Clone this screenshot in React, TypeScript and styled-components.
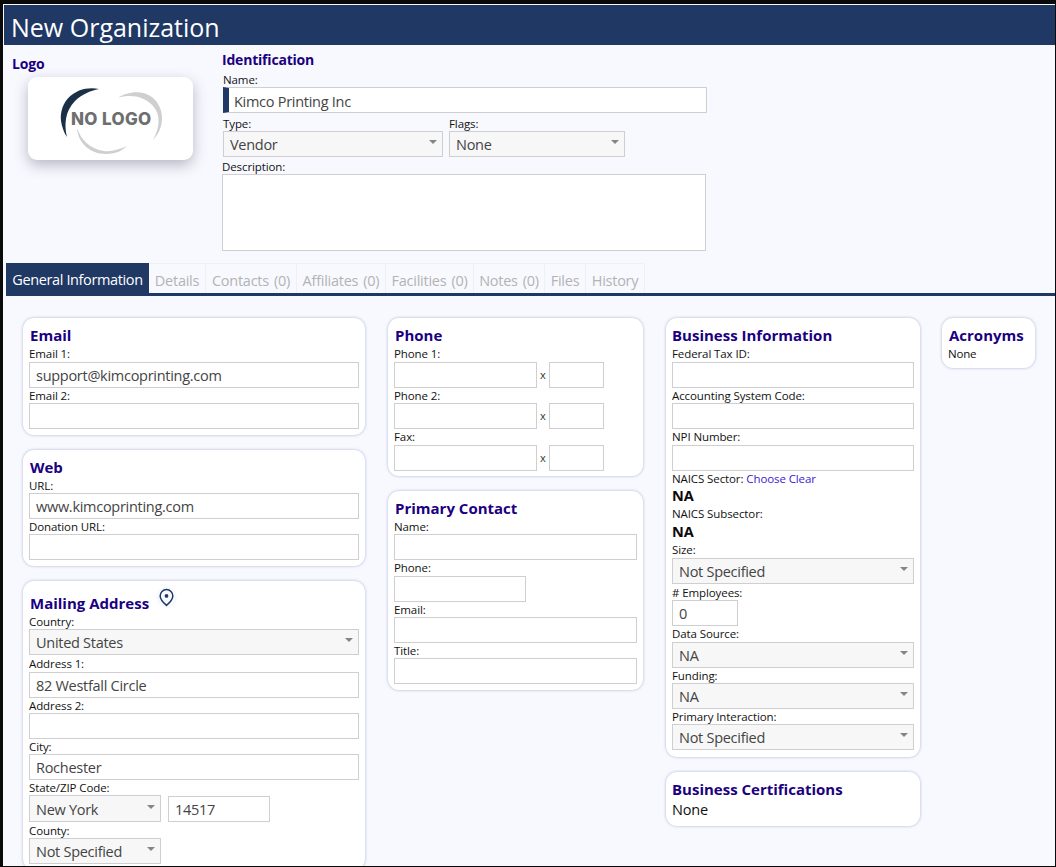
import React from 'react';
import styled, {createGlobalStyle} from 'styled-components';

const NAVY = '#1f3864';
const HEADING = '#1b0080';
const FONT = '"Open Sans", "Noto Sans", sans-serif';

const GlobalStyle = createGlobalStyle`
  html, body {
    margin: 0;
    padding: 0;
    background: #f8f9ff;
    font-family: ${FONT};
    overflow: hidden;
  }
`;

const Frame = styled.div`
  box-sizing: border-box;
  width: 1056px;
  height: 867px;
  overflow: hidden;
  background: #f8f9ff;
  border-style: solid;
  border-color: #0a0a0a;
  border-width: 4px 1px 1px 3px;
`;

const TitleBar = styled.div`
  height: 40px;
  margin: 1px 0 0 1px;
  padding-left: 7px;
  background: ${NAVY};
  color: #fff;
  font-size: 25px;
  line-height: 45px;
`;

const Top = styled.div`
  display: flex;
  height: 218px;
`;

const LogoColumn = styled.div`
  width: 219px;
  padding: 10px 0 0 9px;
  box-sizing: border-box;
`;

const Heading = styled.div`
  font-size: 14px;
  font-weight: 700;
  line-height: 18px;
  color: ${HEADING};
  letter-spacing: -0.2px;
`;

const LogoCard = styled.div`
  width: 165px;
  height: 83px;
  margin: 4px 0 0 16px;
  background: #fff;
  border-radius: 9px;
  box-shadow: 0 5px 14px rgba(60, 60, 80, 0.35);
`;

const IdColumn = styled.div`
  padding-top: 6px;
  width: 490px;
`;

const IdHeading = styled(Heading)`
  margin-bottom: 2.67px;
`;

const Row = styled.div<{$gap?: number}>`
  display: flex;
  align-items: center;
  gap: ${(p) => p.$gap ?? 6}px;
`;

const FieldBlock = styled.div<{$above?: number}>`
  margin-top: ${(p) => p.$above ?? 0}px;
`;

const Label = styled.div`
  font-size: 11.5px;
  line-height: 16px;
  height: 15.33px;
  color: #111;
  letter-spacing: -0.1px;
  white-space: nowrap;
`;

const Box = styled.div<{$width?: number; $accent?: boolean}>`
  box-sizing: border-box;
  width: ${(p) => (p.$width ? `${p.$width}px` : '100%')};
  height: 26px;
  padding-left: ${(p) => (p.$accent ? 5 : 6)}px;
  background: #fff;
  border: 1px solid #cfcfd2;
  border-left: ${(p) => (p.$accent ? `6px solid ${NAVY}` : '1px solid #cfcfd2')};
  color: #444;
  font-size: 14.5px;
  line-height: ${(p) => (p.$accent ? 27 : 25)}px;
  letter-spacing: -0.28px;
  white-space: nowrap;
`;

const SelectBox = styled(Box)<{$tall?: boolean}>`
  display: flex;
  justify-content: space-between;
  align-items: center;
  height: ${(p) => (p.$tall ? 26.67 : 26)}px;
  padding-top: 1px;
  padding-right: 5px;
  background: #f7f7f7;

  &::after {
    content: '';
    border-left: 4.5px solid transparent;
    border-right: 4.5px solid transparent;
    border-top: 4.5px solid #858585;
    margin-top: -5px;
  }
`;

const NameField = styled.div`
  margin-left: 1px;
  width: 484px;
`;

const TypeRow = styled(Row)`
  margin: 2.67px 0 0 1px;
`;

const DescField = styled.div`
  margin-top: 2px;
`;

const TextArea = styled(Box)`
  width: 484px;
  height: 77px;
`;

const Tabs = styled.div`
  display: flex;
  height: 30px;
  margin-left: 3px;
  border-bottom: 3px solid ${NAVY};
`;

const Tab = styled.div<{$active?: boolean; $width: number}>`
  box-sizing: border-box;
  width: ${(p) => p.$width}px;
  background: ${(p) => (p.$active ? NAVY : 'transparent')};
  color: ${(p) => (p.$active ? '#fff' : '#b3b3b3')};
  border: ${(p) => (p.$active ? 'none' : '1px solid #f0f0f2')};
  border-bottom: none;
  border-left: none;
  font-size: 14.5px;
  line-height: 34px;
  letter-spacing: ${(p) => (p.$active ? -0.38 : -0.25)}px;
  word-spacing: ${(p) => (p.$active ? 0 : 1.5)}px;
  text-align: center;
  white-space: nowrap;
`;

const Columns = styled.div`
  display: flex;
  align-items: flex-start;
  gap: 22px;
  padding: 22.33px 0 0 20px;
`;

const Column = styled.div<{$width: number; $nudge?: number; $trail?: number}>`
  display: flex;
  flex-direction: column;
  gap: 14.67px;
  flex: none;
  width: ${(p) => p.$width}px;
  margin-left: ${(p) => p.$nudge ?? 0}px;
  margin-right: ${(p) => p.$trail ?? 0}px;
`;

const Card = styled.section<{$bottom?: number}>`
  box-sizing: border-box;
  padding: 7px 6px ${(p) => p.$bottom ?? 6}px;
  background: #fff;
  border-radius: 11px;
  box-shadow: 0 0 3px rgba(165, 172, 210, 0.95);
`;

const CardTitle = styled.div<{$flush?: boolean}>`
  font-size: 15px;
  font-weight: 700;
  line-height: 20px;
  padding-bottom: 1px;
  color: ${HEADING};
  padding-left: ${(p) => (p.$flush ? 0 : 1)}px;
`;

const TitleRow = styled.div`
  display: flex;
  align-items: flex-start;
  gap: 7px;
  height: 25.67px;

  ${CardTitle} {
    margin-top: 5px;
  }
`;

const PinBadge = styled.div`
  display: flex;
  align-items: center;
  justify-content: center;
  width: 21px;
  height: 21px;
  margin-top: -1px;
  border-radius: 50%;
  background: #f8f9ff;
  color: ${NAVY};
`;

const Times = styled.span`
  width: 12px;
  flex: none;
  text-align: center;
  font-size: 11px;
  line-height: 26px;
  color: #333;
`;

const LinkText = styled.span`
  color: #3a19d8;
`;

const Strong = styled.div`
  font-size: 14.5px;
  font-weight: 700;
  line-height: 20.5px;
  color: #0a0a0a;
`;

const Plain = styled.div<{$small?: boolean}>`
  font-size: ${(p) => (p.$small ? 11.5 : 14.5)}px;
  line-height: ${(p) => (p.$small ? 16 : 20)}px;
  color: #111;
  letter-spacing: -0.2px;
`;

const StateLabel = styled(Label)`
  margin-top: -0.33px;
`;

const NoLogo = () => (
  <svg width="165" height="83" viewBox="0 0 165 83">
    <path d="M71 12 C50 8 31 22 33 44 C34 50 36 56 39 60 C36 48 37 34 47 24 C54 17 62 14 71 12Z" fill="#1b2f47" />
    <path d="M90 21 C100 14 118 12 128 24 C137 35 136 52 125 63 C132 50 133 38 125 29 C116 19 102 17 90 21Z" fill="#cfcfcf" />
    <path d="M49 51 C50 66 62 77 78 77 C87 77 94 74 99 69 C92 72 84 75 76 74 C62 72 53 63 49 51Z" fill="#cfcfcf" />
    <text x="43" y="48" fontFamily="Inter, sans-serif" fontWeight="800" fontSize="17" letterSpacing="0.35" fill="#6e6e6e">NO LOGO</text>
  </svg>
);

const PinIcon = () => (
  <svg width="19" height="19" viewBox="0 0 24 24" fill="none" stroke="currentColor" strokeWidth="1.9">
    <path d="M12 2a8 8 0 0 0-8 8c0 5 8 12 8 12s8-7 8-12a8 8 0 0 0-8-8z" />
    <circle cx="12" cy="10" r="2.4" fill="currentColor" stroke="none" />
  </svg>
);

interface FieldProps {
  label: string;
  value?: string;
  width?: number;
  above?: number;
}

const Field = ({label, value, width, above}: FieldProps) => (
  <FieldBlock $above={above}>
    <Label>{label}</Label>
    <Box $width={width}>{value}</Box>
  </FieldBlock>
);

const Select = ({label, value, width, above}: FieldProps) => (
  <FieldBlock $above={above}>
    <Label>{label}</Label>
    <SelectBox $width={width}>{value}</SelectBox>
  </FieldBlock>
);

const PhoneField = ({label, above}: {label: string; above?: number}) => (
  <FieldBlock $above={above}>
    <Label>{label}</Label>
    <Row $gap={0}>
      <Box $width={143} />
      <Times>x</Times>
      <Box $width={55} />
    </Row>
  </FieldBlock>
);

const TABS = [
  {name: 'Details', width: 57},
  {name: 'Contacts (0)', width: 91},
  {name: 'Affiliates (0)', width: 89},
  {name: 'Facilities (0)', width: 88},
  {name: 'Notes (0)', width: 71},
  {name: 'Files', width: 41},
  {name: 'History', width: 59},
];

export default function App() {
  return (
    <Frame>
      <GlobalStyle />
      <TitleBar>New Organization</TitleBar>
      <Top>
        <LogoColumn>
          <Heading>Logo</Heading>
          <LogoCard>
            <NoLogo />
          </LogoCard>
        </LogoColumn>
        <IdColumn>
          <IdHeading>Identification</IdHeading>
          <NameField>
            <Label>Name:</Label>
            <Box $accent>Kimco Printing Inc</Box>
          </NameField>
          <TypeRow>
            <Select label="Type:" value="Vendor" width={220} />
            <Select label="Flags:" value="None" width={176} />
          </TypeRow>
          <DescField>
            <Label>Description:</Label>
            <TextArea />
          </DescField>
        </IdColumn>
      </Top>
      <Tabs>
        <Tab $active $width={143}>General Information</Tab>
        {TABS.map((tab) => (
          <Tab key={tab.name} $width={tab.width}>{tab.name}</Tab>
        ))}
      </Tabs>
      <Columns>
        <Column $width={342} $trail={1}>
          <Card>
            <CardTitle>Email</CardTitle>
            <Field label="Email 1:" value="support@kimcoprinting.com" />
            <Field label="Email 2:" />
          </Card>
          <Card>
            <CardTitle>Web</CardTitle>
            <Field label="URL:" value="www.kimcoprinting.com" />
            <Field label="Donation URL:" />
          </Card>
          <Card>
            <TitleRow>
              <CardTitle>Mailing Address</CardTitle>
              <PinBadge>
                <PinIcon />
              </PinBadge>
            </TitleRow>
            <Select label="Country:" value="United States" />
            <Field label="Address 1:" value="82 Westfall Circle" above={1.3} />
            <Field label="Address 2:" />
            <Field label="City:" value="Rochester" />
            <StateLabel>State/ZIP Code:</StateLabel>
            <Row $gap={7}>
              <SelectBox $tall $width={132}>New York</SelectBox>
              <Box $width={102}>14517</Box>
            </Row>
            <Select label="County:" value="Not Specified" width={132} above={1} />
          </Card>
        </Column>
        <Column $width={255}>
          <Card $bottom={5.66}>
            <CardTitle>Phone</CardTitle>
            <PhoneField label="Phone 1:" />
            <PhoneField label="Phone 2:" />
            <PhoneField label="Fax:" above={0.34} />
          </Card>
          <Card>
            <CardTitle>Primary Contact</CardTitle>
            <Field label="Name:" />
            <Field label="Phone:" width={132} />
            <Field label="Email:" />
            <Field label="Title:" />
          </Card>
        </Column>
        <Column $width={254} $nudge={1}>
          <Card $bottom={7}>
            <CardTitle $flush>Business Information</CardTitle>
            <Field label="Federal Tax ID:" />
            <Field label="Accounting System Code:" />
            <Field label="NPI Number:" above={0.34} />
            <Label>
              NAICS Sector: <LinkText>Choose Clear</LinkText>
            </Label>
            <Strong>NA</Strong>
            <Label>NAICS Subsector:</Label>
            <Strong>NA</Strong>
            <Select label="Size:" value="Not Specified" />
            <Field label="# Employees:" value="0" width={66} above={1} />
            <Select label="Data Source:" value="NA" above={0.4} />
            <Select label="Funding:" value="NA" />
            <Select label="Primary Interaction:" value="Not Specified" />
          </Card>
          <Card>
            <CardTitle $flush>Business Certifications</CardTitle>
            <Plain>None</Plain>
          </Card>
        </Column>
        <Column $width={93}>
          <Card>
            <CardTitle>Acronyms</CardTitle>
            <Plain $small>None</Plain>
          </Card>
        </Column>
      </Columns>
    </Frame>
  );
}
